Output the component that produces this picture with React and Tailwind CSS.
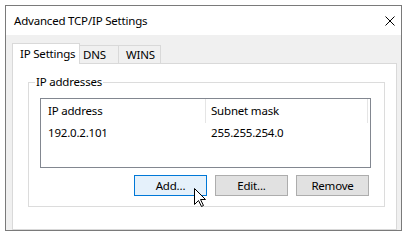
import React from 'react';

const font = { fontFamily: '"Noto Sans", "Open Sans", sans-serif' };

const CloseIcon = () => (
  <svg width="10" height="10" viewBox="0 0 10 10" className="block">
    <path d="M0.5 0.5 L9.5 9.5 M9.5 0.5 L0.5 9.5" stroke="#000" strokeWidth="1" fill="none" />
  </svg>
);

const Cursor = () => (
  <svg width="13" height="20" viewBox="0 0 13 20" className="block">
    <path
      d="M0.5 0.5 L0.5 16.5 L4.5 12.5 L7.5 18.5 L9.5 17.5 L6.5 11.5 L11.5 11.5 Z"
      fill="#fff"
      stroke="#000"
      strokeWidth="1"
      strokeLinejoin="miter"
    />
  </svg>
);

const Button = ({ children, focused }) => (
  <button
    className={`w-[73px] h-[21px] border text-[11.5px] leading-none text-black flex items-center justify-center ${
      focused ? 'border-[#0078d7] bg-[#e5f1fb]' : 'border-[#adadad] bg-[#e1e1e1]'
    }`}
  >
    {children}
  </button>
);

const App = () => {
  return (
    <div
      className="w-[409px] h-[231px] bg-white pl-[5px] pt-[5px] relative overflow-hidden whitespace-nowrap tracking-[-0.2px]"
      style={font}
    >
      <div className="w-[397px] h-[226px] border border-[#7a7a7a] flex flex-col overflow-hidden">
        {/* title bar */}
        <div className="h-[29px] shrink-0 bg-white flex items-center justify-between pl-[8px] pr-[6px]">
          <span className="text-[11.5px] text-black leading-none">Advanced TCP/IP Settings</span>
          <CloseIcon />
        </div>

        {/* body */}
        <div className="flex-1 bg-[#f0f0f0] pt-[8px] pl-[6px] pr-[4px] flex flex-col min-h-0">
          <div className="flex items-end relative z-10 -mb-[1px]">
            <div className="w-[68px] h-[21px] border border-b-0 border-[#d9d9d9] bg-white pl-[7px] flex items-center text-[11.5px] text-black leading-none">
              IP Settings
            </div>
            <div className="w-[39px] h-[19px] border border-l-0 border-[#d9d9d9] bg-[#f0f0f0] pl-[3px] flex items-center text-[11.5px] text-black leading-none">
              DNS
            </div>
            <div className="w-[42px] h-[19px] border border-l-0 border-[#d9d9d9] bg-[#f0f0f0] pl-[7px] flex items-center text-[11.5px] text-black leading-none">
              WINS
            </div>
          </div>

          <div className="flex-1 border border-[#d9d9d9] bg-white">
            {/* group box */}
            <div className="relative ml-[15px] mt-[18px] w-[357px] h-[125px] border border-[#dcdcdc]">
              <span className="absolute -top-[9px] left-[6px] bg-white px-[1px] text-[11.5px] leading-[16px] text-black">
                IP addresses
              </span>

              <div className="ml-[11px] mt-[15px] w-[331px] h-[70px] border border-[#828790] bg-white text-[11.5px] text-black">
                <div className="h-[24px] flex">
                  <div className="w-[164px] pl-[7px] flex items-center leading-none">IP address</div>
                  <div className="w-px bg-[#e5e5e5]" />
                  <div className="w-[161px] pl-[5px] flex items-center leading-none">Subnet mask</div>
                  <div className="w-px bg-[#e5e5e5]" />
                </div>
                <div className="h-[20px] flex">
                  <div className="w-[165px] pl-[7px] flex items-center leading-none">192.0.2.101</div>
                  <div className="pl-[5px] flex items-center leading-none">255.255.254.0</div>
                </div>
              </div>

              <div className="ml-[11px] mt-[7px] w-[331px] pr-[2px] flex justify-end gap-[8px]">
                <Button focused>Add...</Button>
                <Button>Edit...</Button>
                <Button>Remove</Button>
              </div>
            </div>
          </div>
        </div>
      </div>

      {/* mouse pointer over Add button */}
      <div className="absolute left-[194px] top-[188px]">
        <Cursor />
      </div>
    </div>
  );
};

export default App;
